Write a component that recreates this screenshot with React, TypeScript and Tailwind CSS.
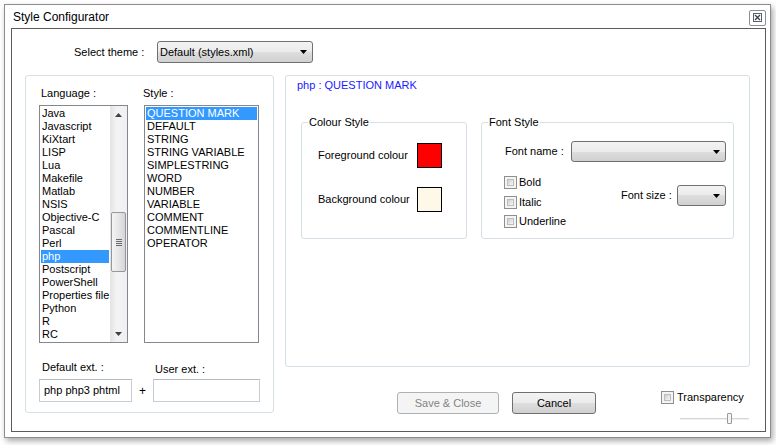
import React from 'react';

const languages = [
  'Java', 'Javascript', 'KiXtart', 'LISP', 'Lua', 'Makefile', 'Matlab', 'NSIS', 'Objective-C',
  'Pascal', 'Perl', 'php', 'Postscript', 'PowerShell', 'Properties file', 'Python', 'R', 'RC',
];

const styles = [
  'QUESTION MARK', 'DEFAULT', 'STRING', 'STRING VARIABLE', 'SIMPLESTRING', 'WORD', 'NUMBER',
  'VARIABLE', 'COMMENT', 'COMMENTLINE', 'OPERATOR',
];

const btnBg =
  'bg-[linear-gradient(to_bottom,#f3f3f3_0%,#ebebeb_50%,#dedede_50%,#d0d0d0_100%)]';

const Arrow = () => (
  <svg width="7" height="4" viewBox="0 0 7 4" className="shrink-0">
    <path d="M0 0h7L3.5 4z" fill="#000" />
  </svg>
);

const Dropdown = ({ w, h, text }: { w: string; h: string; text?: string }) => (
  <div
    className={`${w} ${h} ${btnBg} border border-[#707070] rounded-[3px] flex items-center pl-[2px] pr-[5px]`}
  >
    <span className="flex-1 truncate">{text}</span>
    <Arrow />
  </div>
);

const Checkbox = () => (
  <div className="w-[13px] h-[13px] border border-[#8e8f8f] bg-[#f4f4f4] p-[2px] shrink-0">
    <div className="w-full h-full border border-[#bdbdbd] bg-[linear-gradient(135deg,#cfcfcf,#f7f7f7)]" />
  </div>
);

const GroupBox = ({
  title,
  className,
  children,
}: {
  title: string;
  className: string;
  children: React.ReactNode;
}) => (
  <div className={`relative border border-[#d5dfe5] rounded-[3px] ${className}`}>
    <span className="absolute -top-[7px] left-[6px] bg-white px-[1px] leading-[13px]">{title}</span>
    {children}
  </div>
);

export default function App() {
  return (
    <div className="w-[776px] h-[445px] bg-white font-['Liberation_Sans',Arial,sans-serif] text-[11px] text-black leading-[13px] overflow-hidden">
      <div className="ml-[4px] mt-[4px] w-[767px] h-[434px] border border-[#8d8d8d] bg-white shadow-[2px_3px_6px_rgba(0,0,0,0.35)]">
        {/* title bar */}
        <div className="h-[23px] flex items-center pl-[8px] pr-[4px]">
          <span className="text-[12px] flex-1 pt-[1px]">Style Configurator</span>
          <div className="w-[17px] h-[16px] mt-[2px] border border-[#8a8f99] rounded-[2px] flex items-center justify-center bg-white">
            <svg width="9" height="9" viewBox="0 0 9 9">
              <rect x="0.5" y="0.5" width="8" height="8" fill="none" stroke="#59606b" />
              <path d="M2 2l5 5M7 2L2 7" stroke="#3d4450" strokeWidth="1.4" />
            </svg>
          </div>
        </div>

        {/* inner frame */}
        <div className="ml-[6px] mr-[4px] h-[404px] border border-[#5b5b5b]">
          {/* theme row */}
          <div className="mt-[12px] pl-[62px] flex items-center">
            <span className="w-[83px]">Select theme :</span>
            <Dropdown w="w-[156px]" h="h-[22px]" text="Default (styles.xml)" />
          </div>

          <div className="mt-[12px] pl-[13px] flex items-start">
            {/* left group */}
            <div className="w-[249px] h-[338px] border border-[#d5dfe5] rounded-[3px] pt-[11px]">
              <div className="flex pl-[15px]">
                <span className="w-[102px]">Language :</span>
                <span>Style :</span>
              </div>
              <div className="flex mt-[5px] ml-[13px]">
                <div className="w-[89px] h-[238px] border border-[#828790] flex overflow-hidden">
                  <div className="flex-1 pt-[1px] px-[1px]">
                    {languages.map((l) => (
                      <div
                        key={l}
                        className={`h-[13px] pl-[1px] whitespace-nowrap ${l === 'php' ? 'bg-[#3399ff] text-white' : ''}`}
                      >
                        {l}
                      </div>
                    ))}
                  </div>
                  {/* scrollbar */}
                  <div className="w-[17px] h-full bg-[linear-gradient(to_right,#e3e3e3,#f3f3f3_40%,#f0f0f0)] flex flex-col items-center">
                    <div className="h-[17px] flex items-center justify-center">
                      <svg width="7" height="4" viewBox="0 0 7 4">
                        <path d="M3.5 0L7 4H0z" fill="#404040" />
                      </svg>
                    </div>
                    <div className="mt-[89px] w-[15px] h-[60px] border border-[#979797] rounded-[2px] bg-[linear-gradient(to_right,#f4f4f4,#e6e6e6_50%,#d6d6d6)] flex flex-col items-center justify-center gap-[1px]">
                      {[0, 1, 2, 3].map((i) => (
                        <div key={i} className="w-[6px] h-[1px] bg-[#6a6a6a]" />
                      ))}
                    </div>
                    <div className="mt-auto h-[17px] flex items-center justify-center">
                      <svg width="7" height="4" viewBox="0 0 7 4">
                        <path d="M0 0h7L3.5 4z" fill="#404040" />
                      </svg>
                    </div>
                  </div>
                </div>
                <div className="ml-[16px] w-[115px] h-[238px] border border-[#828790] pt-[1px] px-[1px] overflow-hidden">
                  {styles.map((s, i) => (
                    <div
                      key={s}
                      className={`h-[13px] pl-[1px] whitespace-nowrap ${i === 0 ? 'bg-[#3399ff] text-white' : ''}`}
                    >
                      {s}
                    </div>
                  ))}
                </div>
              </div>
              <div className="flex h-[13px] mt-[18px] pl-[16px]">
                <span className="w-[113px]">Default ext. :</span>
                <span className="mt-[2px]">User ext. :</span>
              </div>
              <div className="flex mt-[5px] ml-[13px] items-center">
                <div className="w-[93px] h-[23px] border border-[#c8cdd4] border-t-[#b5b9c0] flex items-center pl-[4px]">
                  php php3 phtml
                </div>
                <span className="w-[21px] text-center text-[12px] pt-[2px]">+</span>
                <div className="w-[107px] h-[23px] border border-[#c8cdd4] border-t-[#b5b9c0]" />
              </div>
            </div>

            {/* right column */}
            <div className="ml-[11px]">
              <div className="w-[465px] h-[292px] border border-[#d5dfe5] rounded-[3px] pt-[3px]">
                <div className="pl-[11px] text-[#1a1aff]">php : QUESTION MARK</div>
                <div className="flex mt-[30px] ml-[15px]">
                  <GroupBox title="Colour Style" className="w-[166px] h-[117px]">
                    <div className="mt-[20px] pl-[16px] flex items-center">
                      <span className="w-[99px]">Foreground colour</span>
                      <div className="w-[25px] h-[25px] border border-black bg-[#ff0000]" />
                    </div>
                    <div className="mt-[19px] pl-[16px] flex items-center">
                      <span className="w-[99px]">Background colour</span>
                      <div className="w-[25px] h-[25px] border border-black bg-[#fdf8e8]" />
                    </div>
                  </GroupBox>
                  <GroupBox title="Font Style" className="ml-[14px] w-[253px] h-[117px]">
                    <div className="mt-[18px] pl-[23px] flex items-center">
                      <span className="w-[66px]">Font name :</span>
                      <Dropdown w="w-[155px]" h="h-[21px]" />
                    </div>
                    <div className="mt-[14px] pl-[22px] flex items-start">
                      <div className="w-[117px] flex flex-col">
                        <div className="flex items-center gap-[2px] h-[13px]">
                          <Checkbox />
                          <span>Bold</span>
                        </div>
                        <div className="flex items-center gap-[2px] h-[13px] mt-[7px]">
                          <Checkbox />
                          <span>Italic</span>
                        </div>
                        <div className="flex items-center gap-[2px] h-[13px] mt-[6px]">
                          <Checkbox />
                          <span>Underline</span>
                        </div>
                      </div>
                      <div className="mt-[9px] flex items-center">
                        <span className="w-[56px]">Font size :</span>
                        <Dropdown w="w-[49px]" h="h-[21px]" />
                      </div>
                    </div>
                  </GroupBox>
                </div>
              </div>

              {/* bottom buttons */}
              <div className="flex items-start mt-[25px]">
                <div className="ml-[112px] w-[102px] h-[22px] border border-[#adb2b5] rounded-[3px] bg-[#f4f4f4] text-[#838383] flex items-center justify-center">
                  Save &amp; Close
                </div>
                <div
                  className={`ml-[13px] w-[84px] h-[22px] border border-[#707070] rounded-[3px] ${btnBg} flex items-center justify-center`}
                >
                  Cancel
                </div>
                <div className="ml-[65px] -mt-[1px] flex flex-col">
                  <div className="flex items-center gap-[3px]">
                    <Checkbox />
                    <span>Transparency</span>
                  </div>
                  <div className="ml-[19px] mt-[9px] w-[69px] h-[11px] relative flex items-center">
                    <div className="w-full h-[2px] bg-[#d6d6d6] border-b border-[#f0f0f0]" />
                    <div className="absolute left-[47px] top-0 w-[5px] h-[11px] border border-[#9a9a9a] rounded-[1px] bg-[#f4f4f4]" />
                  </div>
                </div>
              </div>
            </div>
          </div>
        </div>
      </div>
    </div>
  );
}
